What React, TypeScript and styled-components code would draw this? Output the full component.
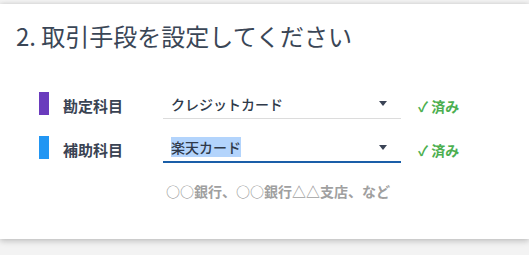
import React from 'react'
import styled, { createGlobalStyle } from 'styled-components'

const GlobalStyle = createGlobalStyle`
  html, body {
    margin: 0;
    padding: 0;
    background: #f3f3f3;
    font-family: 'Noto Sans CJK JP', 'Noto Sans', sans-serif;
  }
`

const Page = styled.div`
  padding-top: 4px;
  width: 529px;
  height: 255px;
  box-sizing: border-box;
  overflow: hidden;
`

const Card = styled.section`
  background: #ffffff;
  height: 235px;
  box-sizing: border-box;
  padding: 14px 16px 0;
  box-shadow: 0 2px 6px rgba(0, 0, 0, 0.22), 0 -1px 4px rgba(0, 0, 0, 0.06);
`

const Title = styled.h2`
  margin: 0;
  font-size: 24px;
  line-height: 36px;
  font-weight: 400;
  color: #3a4656;
`

const Form = styled.div`
  display: flex;
  flex-direction: column;
  gap: 17px;
  margin-top: 38px;
  padding-left: 23px;
`

const Row = styled.div`
  display: flex;
  align-items: center;
  height: 27px;
`

const Bar = styled.span<{ $color: string }>`
  width: 10px;
  height: 23px;
  background: ${(p) => p.$color};
  margin-right: 14px;
  align-self: flex-start;
`

const Label = styled.span`
  width: 100px;
  font-size: 15px;
  font-weight: 700;
  color: #3a4353;
`

const Select = styled.div<{ $focused?: boolean }>`
  width: 238px;
  height: 27px;
  box-sizing: border-box;
  display: flex;
  align-items: center;
  justify-content: space-between;
  padding: 0 14px 3px 8px;
  border-bottom: ${(p) => (p.$focused ? '2px solid #1a5ea8' : '1px solid #dcdcdc')};
  font-size: 14px;
  font-weight: 500;
  color: #2f3a4a;
`

const Highlight = styled.span`
  background: #b3d4fc;
  line-height: 20px;
`

const Arrow = styled.span`
  width: 0;
  height: 0;
  border-left: 4px solid transparent;
  border-right: 4px solid transparent;
  border-top: 5px solid #3b4456;
`

const Done = styled.span`
  margin-left: 17px;
  font-size: 14px;
  font-weight: 700;
  color: #4caf50;
`

const Hint = styled.p`
  margin: 18px 0 0 150px;
  font-size: 14px;
  font-weight: 700;
  color: #a0a0a0;
`

export default function App() {
  return (
    <Page>
      <GlobalStyle />
      <Card>
        <Title>2. 取引手段を設定してください</Title>
        <Form>
          <Row>
            <Bar $color="#6a3bbd" />
            <Label>勘定科目</Label>
            <Select>
              <span>クレジットカード</span>
              <Arrow />
            </Select>
            <Done>✓ 済み</Done>
          </Row>
          <Row>
            <Bar $color="#2196f3" />
            <Label>補助科目</Label>
            <Select $focused>
              <Highlight>楽天カード</Highlight>
              <Arrow />
            </Select>
            <Done>✓ 済み</Done>
          </Row>
        </Form>
        <Hint>○○銀行、○○銀行△△支店、など</Hint>
      </Card>
    </Page>
  )
}
